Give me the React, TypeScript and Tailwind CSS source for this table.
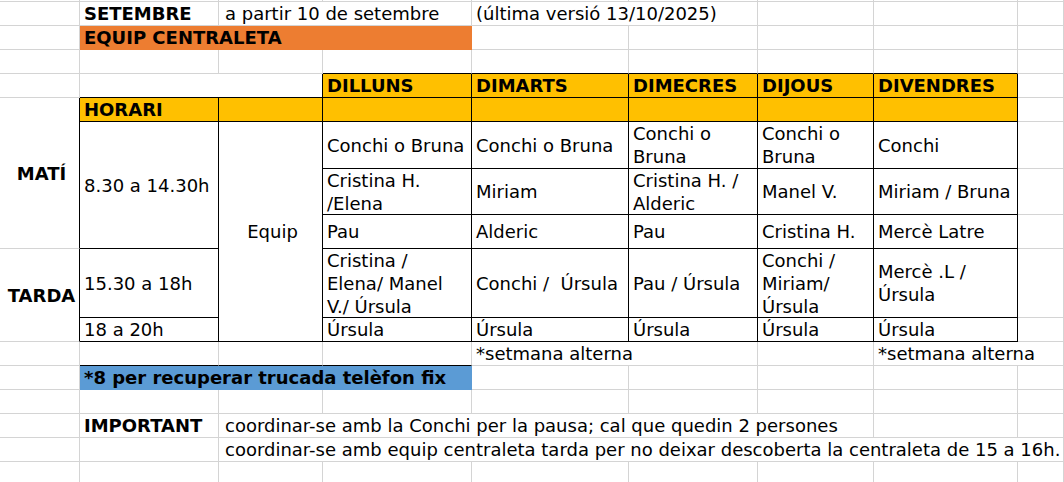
import React from "react";

const G = "border-r border-b border-[#d4d4d4]";
const K = "border-r border-b border-black";
const base = "flex items-center whitespace-nowrap pl-[4px] min-w-0";
const Y = "bg-[#ffc000]";

function C({ cls = G, children }: { cls?: string; children?: React.ReactNode }) {
  return <div className={`${base} ${cls}`}>{children}</div>;
}

export default function App() {
  return (
    <div className="w-[1064px] h-[482px] overflow-hidden bg-white text-black font-['DejaVu_Sans',Verdana,sans-serif] text-[18px] leading-[23px]">
      <div className="grid grid-cols-[80px_139px_104px_149px_157px_129px_116px_144px_46px] grid-rows-[2px_24px_24px_24px_24px_24px_47px_46px_34px_69px_24px_24px_24px_24px_24px_24px_24px]">
        {/* row 0 */}
        <C /><C /><C /><C /><C /><C /><C /><C /><C />
        {/* row 1 */}
        <C />
        <C cls={`${G} font-bold`}>SETEMBRE</C>
        <C cls={`${G} col-span-2 pl-[6px]`}>a partir 10 de setembre</C>
        <C cls={`${G} col-span-2`}>(última versió 13/10/2025)</C>
        <C /><C /><C />
        {/* row 2 */}
        <C />
        <C cls="col-span-3 border-r border-b border-[#ed7d31] bg-[#ed7d31] font-bold">EQUIP CENTRALETA</C>
        <C /><C /><C /><C /><C />
        {/* row 3 */}
        <C /><C /><C />
        <C cls="border-r border-b border-r-[#d4d4d4] border-b-black" />
        <C cls="border-r border-b border-r-[#d4d4d4] border-b-black" />
        <C cls="border-r border-b border-r-[#d4d4d4] border-b-black" />
        <C cls="border-r border-b border-r-[#d4d4d4] border-b-black" />
        <C cls="border-r border-b border-r-[#d4d4d4] border-b-black" />
        <C />
        {/* row 4 */}
        <C />
        <C cls={`${K} col-span-2`} />
        <C cls={`${K} ${Y} font-bold`}>DILLUNS</C>
        <C cls={`${K} ${Y} font-bold`}>DIMARTS</C>
        <C cls={`${K} ${Y} font-bold`}>DIMECRES</C>
        <C cls={`${K} ${Y} font-bold`}>DIJOUS</C>
        <C cls={`${K} ${Y} font-bold`}>DIVENDRES</C>
        <C />
        {/* row 5 */}
        <C cls="row-span-4 border-r border-b border-r-black border-b-[#d4d4d4] justify-center pl-0 font-bold">MATÍ</C>
        <C cls={`${K} ${Y} font-bold`}>HORARI</C>
        <C cls={`${K} ${Y}`} />
        <C cls={`${K} ${Y}`} />
        <C cls={`${K} ${Y}`} />
        <C cls={`${K} ${Y}`} />
        <C cls={`${K} ${Y}`} />
        <C cls={`${K} ${Y}`} />
        <C />
        {/* row 6 */}
        <C cls={`${K} row-span-3`}>8.30 a 14.30h</C>
        <C cls={`${K} row-span-5 justify-center pl-0`}>Equip</C>
        <C cls={K}>Conchi o Bruna</C>
        <C cls={K}>Conchi o Bruna</C>
        <C cls={K}>Conchi o<br />Bruna</C>
        <C cls={K}>Conchi o<br />Bruna</C>
        <C cls={K}>Conchi</C>
        <C />
        {/* row 7 */}
        <C cls={K}>Cristina H.<br />/Elena</C>
        <C cls={K}>Miriam</C>
        <C cls={K}>Cristina H. /<br />Alderic</C>
        <C cls={K}>Manel V.</C>
        <C cls={K}>Miriam / Bruna</C>
        <C />
        {/* row 8 */}
        <C cls={K}>Pau</C>
        <C cls={K}>Alderic</C>
        <C cls={K}>Pau</C>
        <C cls={K}>Cristina H.</C>
        <C cls={K}>Mercè Latre</C>
        <C />
        {/* row 9 */}
        <C cls="row-span-2 border-r border-b border-r-black border-b-[#d4d4d4] justify-center pl-0 font-bold">TARDA</C>
        <C cls={K}>15.30 a 18h</C>
        <C cls={K}>Cristina /<br />Elena/ Manel<br />V./ Úrsula</C>
        <C cls={`${K} whitespace-pre`}>Conchi /  Úrsula</C>
        <C cls={K}>Pau / Úrsula</C>
        <C cls={K}>Conchi /<br />Miriam/<br />Úrsula</C>
        <C cls={K}>Mercè .L /<br />Úrsula</C>
        <C />
        {/* row 10 */}
        <C cls={K}>18 a 20h</C>
        <C cls={K}>Úrsula</C>
        <C cls={K}>Úrsula</C>
        <C cls={K}>Úrsula</C>
        <C cls={K}>Úrsula</C>
        <C cls={K}>Úrsula</C>
        <C />
        {/* row 11 */}
        <C />
        <C cls="border-r border-b border-r-[#d4d4d4] border-b-black" />
        <C cls="border-r border-b border-r-[#d4d4d4] border-b-black" />
        <C cls="border-r border-b border-r-[#d4d4d4] border-b-black" />
        <C cls={`${G} col-span-2`}>*setmana alterna</C>
        <C />
        <C cls={`${G} col-span-2`}>*setmana alterna</C>
        {/* row 12 */}
        <C />
        <C cls="col-span-3 border-r border-b border-[#5b9bd5] bg-[#5b9bd5] font-bold">*8 per recuperar trucada telèfon fix</C>
        <C /><C /><C /><C /><C />
        {/* row 13 */}
        <C /><C /><C /><C /><C /><C /><C /><C /><C />
        {/* row 14 */}
        <C />
        <C cls={`${G} font-bold`}>IMPORTANT</C>
        <C cls={`${G} col-span-5 pl-[6px]`}>coordinar-se amb la Conchi per la pausa; cal que quedin 2 persones</C>
        <C /><C />
        {/* row 15 */}
        <C /><C />
        <C cls={`${G} col-span-7 pl-[6px]`}>coordinar-se amb equip centraleta tarda per no deixar descoberta la centraleta de 15 a 16h.</C>
        {/* row 16 */}
        <C /><C /><C /><C /><C /><C /><C /><C /><C />
      </div>
    </div>
  );
}
